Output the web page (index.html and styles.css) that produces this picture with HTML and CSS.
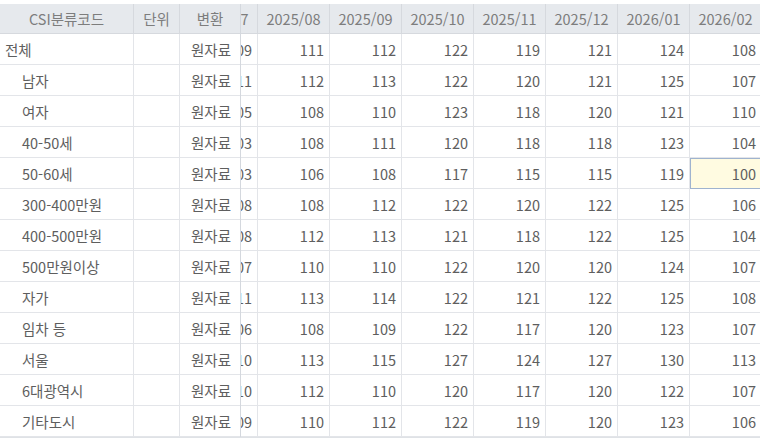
FILE: index.html
```html
<!DOCTYPE html>
<html lang="ko">
<head>
<meta charset="utf-8">
<link rel="stylesheet" href="styles.css">
</head>
<body>
<div class="grid">
  <div class="frozen">
    <div class="hc">CSI분류코드</div><div class="hc">단위</div><div class="hc">변환</div>
    <div class="c l">전체</div><div class="c"></div><div class="c r">원자료</div>
    <div class="c l i">남자</div><div class="c"></div><div class="c r">원자료</div>
    <div class="c l i">여자</div><div class="c"></div><div class="c r">원자료</div>
    <div class="c l i">40-50세</div><div class="c"></div><div class="c r">원자료</div>
    <div class="c l i">50-60세</div><div class="c"></div><div class="c r">원자료</div>
    <div class="c l i">300-400만원</div><div class="c"></div><div class="c r">원자료</div>
    <div class="c l i">400-500만원</div><div class="c"></div><div class="c r">원자료</div>
    <div class="c l i">500만원이상</div><div class="c"></div><div class="c r">원자료</div>
    <div class="c l i">자가</div><div class="c"></div><div class="c r">원자료</div>
    <div class="c l i">임차 등</div><div class="c"></div><div class="c r">원자료</div>
    <div class="c l i">서울</div><div class="c"></div><div class="c r">원자료</div>
    <div class="c l i">6대광역시</div><div class="c"></div><div class="c r">원자료</div>
    <div class="c l i">기타도시</div><div class="c"></div><div class="c r">원자료</div>
  </div>
  <div class="scroll">
    <div class="inner">
      <div class="hc">2025/07</div><div class="hc">2025/08</div><div class="hc">2025/09</div><div class="hc">2025/10</div><div class="hc">2025/11</div><div class="hc">2025/12</div><div class="hc">2026/01</div><div class="hc">2026/02</div>
      <div class="c r">109</div><div class="c r">111</div><div class="c r">112</div><div class="c r">122</div><div class="c r">119</div><div class="c r">121</div><div class="c r">124</div><div class="c r">108</div>
      <div class="c r">111</div><div class="c r">112</div><div class="c r">113</div><div class="c r">122</div><div class="c r">120</div><div class="c r">121</div><div class="c r">125</div><div class="c r">107</div>
      <div class="c r">105</div><div class="c r">108</div><div class="c r">110</div><div class="c r">123</div><div class="c r">118</div><div class="c r">120</div><div class="c r">121</div><div class="c r">110</div>
      <div class="c r">103</div><div class="c r">108</div><div class="c r">111</div><div class="c r">120</div><div class="c r">118</div><div class="c r">118</div><div class="c r">123</div><div class="c r">104</div>
      <div class="c r">103</div><div class="c r">106</div><div class="c r">108</div><div class="c r">117</div><div class="c r">115</div><div class="c r">115</div><div class="c r">119</div><div class="c r sel">100</div>
      <div class="c r">108</div><div class="c r">108</div><div class="c r">112</div><div class="c r">122</div><div class="c r">120</div><div class="c r">122</div><div class="c r">125</div><div class="c r">106</div>
      <div class="c r">108</div><div class="c r">112</div><div class="c r">113</div><div class="c r">121</div><div class="c r">118</div><div class="c r">122</div><div class="c r">125</div><div class="c r">104</div>
      <div class="c r">107</div><div class="c r">110</div><div class="c r">110</div><div class="c r">122</div><div class="c r">120</div><div class="c r">120</div><div class="c r">124</div><div class="c r">107</div>
      <div class="c r">111</div><div class="c r">113</div><div class="c r">114</div><div class="c r">122</div><div class="c r">121</div><div class="c r">122</div><div class="c r">125</div><div class="c r">108</div>
      <div class="c r">106</div><div class="c r">108</div><div class="c r">109</div><div class="c r">122</div><div class="c r">117</div><div class="c r">120</div><div class="c r">123</div><div class="c r">107</div>
      <div class="c r">110</div><div class="c r">113</div><div class="c r">115</div><div class="c r">127</div><div class="c r">124</div><div class="c r">127</div><div class="c r">130</div><div class="c r">113</div>
      <div class="c r">110</div><div class="c r">112</div><div class="c r">110</div><div class="c r">120</div><div class="c r">117</div><div class="c r">120</div><div class="c r">122</div><div class="c r">107</div>
      <div class="c r">109</div><div class="c r">110</div><div class="c r">112</div><div class="c r">122</div><div class="c r">119</div><div class="c r">120</div><div class="c r">123</div><div class="c r">106</div>
    </div>
  </div>
</div>
</body>
</html>
```
FILE: styles.css
```css
html, body {
  margin: 0;
  padding: 0;
  background: #ffffff;
}
body {
  padding-top: 4px;
  font-family: "Noto Sans CJK KR", "Noto Sans", sans-serif;
  font-size: 14.5px;
  color: #5e5e5e;
}
.grid {
  display: flex;
  width: 760px;
  border-bottom: 1px solid #dfe2e6;
}
.frozen {
  display: grid;
  grid-template-columns: 134px 46px 60px;
  grid-template-rows: 30px;
  grid-auto-rows: 31px;
  flex: none;
  border-right: 1px solid #d4d8de;
}
.scroll {
  flex: 1;
  overflow: hidden;
}
.inner {
  display: grid;
  grid-template-columns: repeat(8, 72px);
  grid-template-rows: 30px;
  grid-auto-rows: 31px;
  margin-left: -55px;
}
.hc {
  background: #e6e9ed;
  color: #7d7d7d;
  display: flex;
  align-items: center;
  justify-content: center;
  border-right: 1px solid #d6d9de;
  border-bottom: 1px solid #d6d9de;
  white-space: nowrap;
  overflow: hidden;
}
.c {
  display: flex;
  align-items: center;
  border-right: 1px solid #e3e5e9;
  border-bottom: 1px solid #e3e5e9;
  padding: 0 5px;
  white-space: nowrap;
  overflow: hidden;
}
.frozen .c:nth-child(3n) {
  border-right: none;
  padding-right: 9px;
}
.frozen .hc:nth-child(3) {
  border-right: none;
}
.l { justify-content: flex-start; }
.i { padding-left: 22px; }
.r { justify-content: flex-end; }
.sel {
  background: #fffbe1;
  outline: 1px solid #9fb3cf;
  outline-offset: -1px;
}
```
